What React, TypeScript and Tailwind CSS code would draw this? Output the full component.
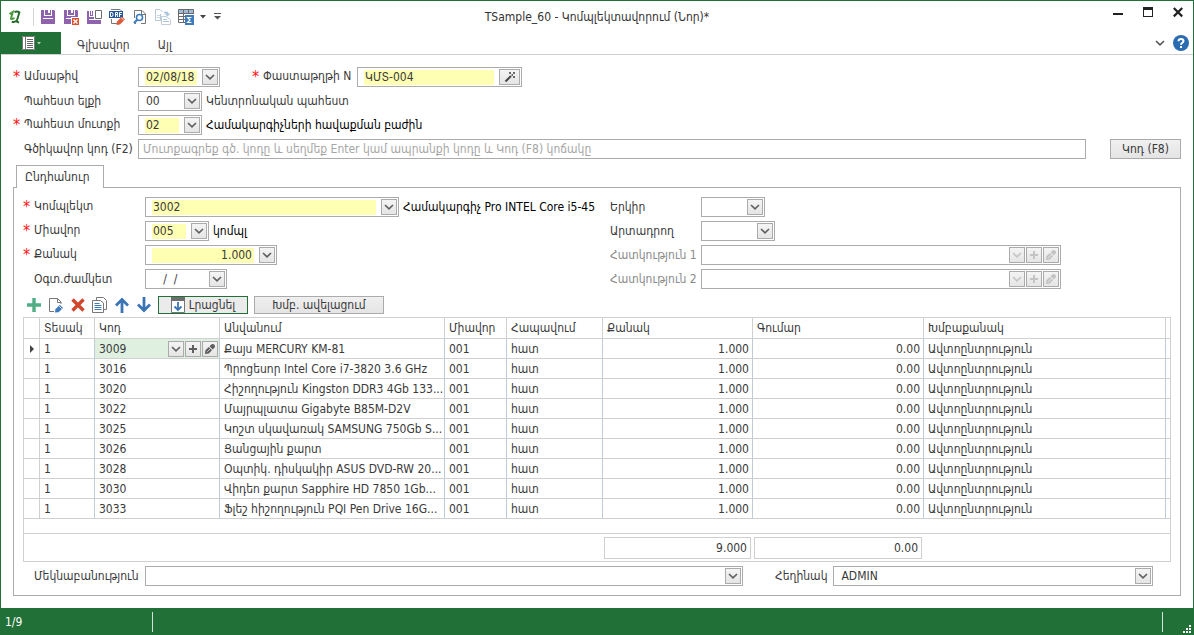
import { useState } from "react";
import type { ReactNode } from "react";
import clsx from "clsx";

const ROWS = [
  { code: "3009", name: "Քայս MERCURY KM-81" },
  { code: "3016", name: "Պրոցեսոր Intel Core i7-3820 3.6 GHz" },
  { code: "3020", name: "Հիշողություն Kingston DDR3 4Gb 133..." },
  { code: "3022", name: "Մայրպլատա Gigabyte B85M-D2V" },
  { code: "3025", name: "Կոշտ սկավառակ SAMSUNG 750Gb S..." },
  { code: "3026", name: "Ցանցային քարտ" },
  { code: "3028", name: "Օպտիկ. դիսկակիր ASUS DVD-RW 20..." },
  { code: "3030", name: "Վիդեո քարտ Sapphire HD 7850 1Gb..." },
  { code: "3033", name: "Ֆլեշ հիշողություն PQI Pen Drive 16G..." },
];

/* ── Icons ── */

function Svg({ children, size = 16 }: { children: ReactNode; size?: number }) {
  return (
    <svg width={size} height={size} viewBox="0 0 16 16" fill="none" aria-hidden="true" className="shrink-0">
      {children}
    </svg>
  );
}

const Logo = () => (
  <Svg>
    <path d="M2.5 5.2 5.8 3 4 9.6Q4.2 10.6 7.6 9.2" stroke="#4b9a3c" strokeWidth="2" />
    <path d="M7.5 3.2Q10 1.8 12.4 3.4L9.6 12.4 12 13.6M4.8 12.6Q7 13.8 9.6 11.8" stroke="#256b2c" strokeWidth="1.9" />
  </Svg>
);

const Floppy = () => (
  <>
    <path d="M1 1H14L15 2V15H1Z" fill="#8e62ac" />
    <path d="M4 1H5V6H11V1H12V7H4Z" fill="#fff" />
    <path d="M8 1H10V4H8Z" fill="#fff" />
    <path d="M3 9H13V10H3Z" fill="#fff" />
  </>
);

const IconSave = () => (
  <Svg>
    <Floppy />
  </Svg>
);

const IconSaveClose = () => (
  <Svg>
    <Floppy />
    <path d="M8 8H16V16H8Z" fill="#fff" />
    <path d="M9 9H16V16H9Z" fill="#d9532f" />
    <path d="M10.5 10.5 14.5 14.5M14.5 10.5 10.5 14.5" stroke="#fff" strokeWidth="1.3" />
  </Svg>
);

const IconSaveNew = () => (
  <Svg>
    <path d="M1 2H3V8H8V11H15V15H1Z" fill="#8e62ac" />
    <path d="M4 2H7V7H4Z" fill="#8e62ac" />
    <path d="M5 2H6V6H5Z" fill="#fff" />
    <path d="M3 10H13V11H3Z" fill="#fff" />
    <path d="M9.5 1.5H15.5V9.5H9.5Z" fill="#fff" stroke="#6d6d6d" />
  </Svg>
);

const IconDrf = () => (
  <Svg>
    <path d="M2 0.5H11L13 2.5" stroke="#777" />
    <path d="M2.5 10V14.5H8" stroke="#777" />
    <path d="M0 2H14V9H0Z" fill="#24569c" />
    <path d="M1.5 3.5V7.5H3Q4 7.5 4 5.5T3 3.5ZM6.5 8V3.5H8.5V5.5H6.5M8 5.5 8.8 8M10.5 8V3.5H13M10.5 5.5H12.5" stroke="#fff" />
    <path d="M8 12.5 13 7.5 16 10.5 11 15.5 7.5 16Z" fill="#dc5b39" />
    <path d="M12 8.5 15 11.5" stroke="#fff" strokeWidth=".8" />
  </Svg>
);

const IconPreview = () => (
  <Svg>
    <path d="M2.5 9V1.5H10L13.5 5V14.5H9M2.5 14V14.5H4" stroke="#777" />
    <path d="M9.5 1.5V5.5H13.5" stroke="#777" />
    <circle cx="7.5" cy="8.5" r="3" fill="#fff" stroke="#3b7cc0" strokeWidth="1.6" />
    <path d="M5.2 10.8 2 14" stroke="#3b7cc0" strokeWidth="2.2" />
  </Svg>
);

const IconCopyTo = () => (
  <Svg>
    <path d="M.5 11.5V.5H5L7.5 3M.5 11.5H5.5V5" stroke="#b7c9da" />
    <path d="M9 3.5H12.5V6M10.5 4.5 12.5 6.5 14.5 4.5" stroke="#a8c4dd" strokeWidth="1.3" />
    <path d="M6.5 7.5H11L15.5 10.5V15.5H6.5Z" fill="#fff" stroke="#c3cdd6" />
    <path d="M8 10.5H12M8 12.5H14" stroke="#a8c4dd" />
    <path d="M2 6.5H5M2 8.5H5" stroke="#c9d6e2" />
  </Svg>
);

const IconTotals = () => (
  <Svg>
    <path d="M0 1H16V5H0Z" fill="#9fbad6" />
    <path d="M.5.5H15.5V5M.5.5V13.5H7M0 4.5H16M0 7.5H7M0 10.5H7M5.5.5V13.5M10.5.5V5" stroke="#6a6a6a" />
    <path d="M7 6H16V16H7Z" fill="#3f7bbb" />
    <path d="M13.5 8.5H9.7L12 11 9.7 13.5H13.5" stroke="#fff" strokeWidth="1.2" />
  </Svg>
);

const IconWand = () => (
  <svg width="12" height="12" viewBox="0 0 12 12" fill="none" aria-hidden="true">
    <path d="M1.5 10.5 7 5" stroke="#4a4a4a" strokeWidth="2" />
    <path d="M5 1H7V3H5ZM9 1H11V3H9ZM9 5H11V7H9ZM7.5 3H9V5H7.5Z" fill="#6a6a6a" />
  </svg>
);

const IconChevron = () => (
  <svg width="10" height="8" viewBox="0 0 10 8" fill="none" aria-hidden="true">
    <path d="M1 2 5 5.8 9 2" stroke="currentColor" strokeWidth="1.6" />
  </svg>
);

const IconPlus = () => (
  <svg width="10" height="10" viewBox="0 0 10 10" fill="none" aria-hidden="true">
    <path d="M5 1V9M1 5H9" stroke="currentColor" strokeWidth="2" />
  </svg>
);

const IconPencil = () => (
  <svg width="12" height="12" viewBox="0 0 12 12" fill="currentColor" aria-hidden="true">
    <path d="M1 11 1.4 7.2 4.8 4 8 7.2 4.8 10.6ZM5.5 3.3 7.6 1.3Q9 .4 10.2 1.6 11.6 3 10.7 4.4L8.7 6.5Z" />
    <path d="M3.2 8.8 6 6" stroke="#f0f0f0" strokeWidth=".7" />
  </svg>
);

const IconNewDoc = () => (
  <Svg>
    <path d="M6 14.5H1.5V1.5H9.5L13 5V7M9.5 1.5V5.5H13" stroke="#777" />
    <path d="M7 15.5 7.4 12.2 11.8 7.8 15 11 10.6 15.2Z" fill="#3f7bbb" />
    <path d="M11 9 13.8 11.8" stroke="#fff" strokeWidth=".8" />
  </Svg>
);

const IconCopy = () => (
  <Svg>
    <path d="M4.5 3V.5H11.5L14.5 3.5V12.5H11.5" stroke="#777" />
    <path d="M.5 3.5H8.5L11.5 6V15.5H.5Z" fill="#fff" stroke="#777" />
    <path d="M2.5 6.5H7.5M2.5 8.5H9.5M2.5 10.5H9.5M2.5 12.5H9.5" stroke="#3f7bbb" />
  </Svg>
);

/* ── Controls ── */

function MiniButton({
  children,
  label,
  wide,
  disabled,
}: {
  children: ReactNode;
  label: string;
  wide?: boolean;
  disabled?: boolean;
}) {
  return (
    <button
      type="button"
      aria-label={label}
      disabled={disabled}
      className={clsx(
        "flex h-4 shrink-0 items-center justify-center border border-[#ababab] bg-linear-to-b from-[#f4f4f4] to-[#e5e5e5]",
        wide ? "w-[21px]" : "w-4",
        disabled ? "text-[#c4c4c4]" : "text-[#5f5f5f]"
      )}
    >
      {children}
    </button>
  );
}

function Box({ children, className }: { children: ReactNode; className: string }) {
  return (
    <div className={clsx("flex h-5 shrink-0 items-center gap-px border border-[#ababab] bg-white pr-px", className)}>
      {children}
    </div>
  );
}

const fieldClass = "mr-1 ml-1.5 h-[15px] min-w-0 flex-1 pl-px leading-[15px] outline-none";

function TextBox(props: {
  id: string;
  value?: string;
  className: string;
  required?: boolean;
  right?: boolean;
  disabled?: boolean;
  children?: ReactNode;
}) {
  return (
    <Box className={props.className}>
      <input
        id={props.id}
        defaultValue={props.value}
        disabled={props.disabled}
        className={clsx(fieldClass, props.required && "bg-[#ffffb4]", props.right && "pr-0.5 text-right")}
      />
      {props.children}
    </Box>
  );
}

function Combo(props: { id: string; value?: string; className: string; required?: boolean }) {
  return (
    <Box className={props.className}>
      <select
        id={props.id}
        defaultValue={props.value}
        className={clsx(fieldClass, "appearance-none", props.required && "bg-[#ffffb4]")}
      >
        <option>{props.value}</option>
      </select>
      <span className="pointer-events-none flex size-4 shrink-0 items-center justify-center border border-[#ababab] bg-linear-to-b from-[#f4f4f4] to-[#e5e5e5] text-[#5f5f5f]">
        <IconChevron />
      </span>
    </Box>
  );
}

function Label({
  children,
  htmlFor,
  required,
  className,
}: {
  children: ReactNode;
  htmlFor: string;
  required?: boolean;
  className?: string;
}) {
  return (
    <label htmlFor={htmlFor} className={clsx("flex shrink-0 whitespace-nowrap", className)}>
      <span className="w-[11px] text-base leading-[18px] text-[#ff1010]">{required && "*"}</span>
      {children}
    </label>
  );
}

function PropertyField({ id, label }: { id: string; label: string }) {
  return (
    <div className="flex items-center">
      <label htmlFor={id} className="w-[91px] shrink-0 whitespace-nowrap text-[#8a8a8a]">
        {label}
      </label>
      <TextBox id={id} disabled className="w-[360px]">
        <MiniButton label="Ընտրել" disabled>
          <IconChevron />
        </MiniButton>
        <MiniButton label="Ավելացնել" disabled>
          <IconPlus />
        </MiniButton>
        <MiniButton label="Խմբագրել" disabled>
          <IconPencil />
        </MiniButton>
      </TextBox>
    </div>
  );
}

/* ── Window parts ── */

function TitleBar() {
  const quick = [
    { label: "Գրանցել", icon: <IconSave /> },
    { label: "Գրանցել և փակել", icon: <IconSaveClose /> },
    { label: "Գրանցել և ստեղծել նորը", icon: <IconSaveNew /> },
    { label: "Սևագիր", icon: <IconDrf /> },
    { label: "Դիտել", icon: <IconPreview /> },
    { label: "Պատճենել", icon: <IconCopyTo /> },
    { label: "Հանրագումար", icon: <IconTotals /> },
  ];
  return (
    <header className="grid h-[31px] grid-cols-[1fr_auto_1fr] items-center">
      <div className="flex items-center pl-1.5">
        <Logo />
        <span className="mr-1.5 ml-2.5 h-[18px] w-px bg-[#d4d4d4]" />
        <div className="flex items-center gap-[7px]">
          {quick.map((q) => (
            <button key={q.label} type="button" aria-label={q.label}>
              {q.icon}
            </button>
          ))}
        </div>
        <button type="button" aria-label="Ավելին" className="ml-1.5">
          <svg width="6" height="4" viewBox="0 0 6 4" aria-hidden="true">
            <path d="M0 0H6L3 3.5Z" fill="#444" />
          </svg>
        </button>
        <button type="button" aria-label="Կարգավորել" className="ml-2">
          <svg width="7" height="7" viewBox="0 0 7 7" aria-hidden="true">
            <path d="M0 0H7V1H0ZM0 3H7L3.5 6.5Z" fill="#555" />
          </svg>
        </button>
      </div>
      <h1 className="text-[#333]">TSample_60 - Կոմպլեկտավորում (Նոր)*</h1>
      <div className="flex items-center justify-end gap-5 self-start pt-1.5 pr-2.5">
        <button type="button" aria-label="Ծալել">
          <svg width="10" height="12" viewBox="0 0 10 12" aria-hidden="true">
            <path d="M0 6H10V8H0Z" fill="#222" />
          </svg>
        </button>
        <button type="button" aria-label="Մեծացնել">
          <svg width="10" height="12" viewBox="0 0 10 12" aria-hidden="true">
            <path d="M0 0H10V10H0ZM1 3V9H9V3Z" fill="#222" fillRule="evenodd" />
          </svg>
        </button>
        <button type="button" aria-label="Փակել">
          <svg width="10" height="12" viewBox="0 0 10 12" fill="none" aria-hidden="true">
            <path d="M.8 1 9.2 9.4M9.2 1 .8 9.4" stroke="#222" strokeWidth="2.2" />
          </svg>
        </button>
      </div>
    </header>
  );
}

function RibbonTabs() {
  return (
    <nav className="flex h-[23px] items-center border-b border-[#d0d0d0] pr-1">
      <button
        type="button"
        aria-label="Մենյու"
        className="flex h-full w-[60px] items-center justify-center gap-0.5 bg-[#217037]"
      >
        <svg width="13" height="14" viewBox="0 0 13 14" fill="none" aria-hidden="true">
          <path d="M0 0H13V14H0Z" fill="#fff" />
          <path d="M.5.5H12.5V13.5H.5ZM3.5.5V13.5" stroke="#777" />
          <path d="M5 3.5H11M5 5.5H11M5 7.5H11M5 9.5H11M5 11.5H11" stroke="#666" />
        </svg>
        <svg width="4" height="3" viewBox="0 0 4 3" aria-hidden="true">
          <path d="M0 0H4L2 2.5Z" fill="#b5cfbb" />
        </svg>
      </button>
      <button type="button" className="ml-4 pt-1 text-[#444]">
        Գլխավոր
      </button>
      <button type="button" className="ml-7 pt-1 text-[#444]">
        Այլ
      </button>
      <button type="button" aria-label="Ծալել ժապավենը" className="ml-auto text-[#555]">
        <IconChevron />
      </button>
      <button type="button" aria-label="Օգնություն" className="ml-2">
        <Svg>
          <circle cx="8" cy="8" r="8" fill="#2b6cb0" />
          <path d="M5.5 6.2Q5.6 4 8 4T10.5 6.1Q10.5 7.2 9.2 7.8 8 8.4 8 9.8" stroke="#fff" strokeWidth="2" />
          <path d="M7 11H9V13H7Z" fill="#fff" />
        </Svg>
      </button>
    </nav>
  );
}

function Toolbar() {
  return (
    <div className="flex h-5 items-center gap-1.5 pl-[3px]">
      <button type="button" aria-label="Ավելացնել տող">
        <Svg>
          <path d="M8 1V15M1 8H15" stroke="#4fae84" strokeWidth="3.4" />
        </Svg>
      </button>
      <button type="button" aria-label="Խմբագրել տողը">
        <IconNewDoc />
      </button>
      <button type="button" aria-label="Հեռացնել տողը">
        <Svg>
          <path d="M2.5 2.5 13.5 13.5M13.5 2.5 2.5 13.5" stroke="#d0452b" strokeWidth="3.4" />
        </Svg>
      </button>
      <button type="button" aria-label="Պատճենել տողը">
        <IconCopy />
      </button>
      <button type="button" aria-label="Վերև">
        <Svg>
          <path d="M8 16V2.5M2 8.5 8 2.5 14 8.5" stroke="#3a74b5" strokeWidth="2.8" />
        </Svg>
      </button>
      <button type="button" aria-label="Ներքև">
        <Svg>
          <path d="M8 0V13.5M2 7.5 8 13.5 14 7.5" stroke="#3a74b5" strokeWidth="2.8" />
        </Svg>
      </button>
      <button
        type="button"
        className="flex h-[18px] w-[90px] items-center justify-center gap-1 border border-[#217037] bg-[#ebebeb]"
      >
        <svg width="14" height="16" viewBox="0 0 14 16" fill="none" aria-hidden="true">
          <path d="M.5 1.5H13.5V15.5H.5Z" fill="#fff" stroke="#777" />
          <path d="M0 0H14V4H0Z" fill="#6e6e6e" />
          <path d="M7 5V13M3.5 9.5 7 13 10.5 9.5" stroke="#3a74b5" strokeWidth="1.8" />
        </svg>
        Լրացնել
      </button>
      <button
        type="button"
        className="h-[18px] w-[130px] border border-[#ababab] bg-linear-to-b from-[#f0f0f0] to-[#e4e4e4] leading-4"
      >
        Խմբ. ավելացում
      </button>
    </div>
  );
}

const th = "border-r border-b border-[#d0d0d0] px-1 text-left font-normal";
const td = "overflow-hidden border-r border-b border-r-[#bfcbd9] border-b-[#d0d0d0] pl-1 whitespace-nowrap";
const num = "pr-[3px] text-right";

function ItemsGrid() {
  const [active, setActive] = useState(0);

  return (
    <div className="border border-[#d0d0d0]">
      <table className="w-full table-fixed border-separate border-spacing-0">
        <colgroup>
          <col className="w-4" />
          <col className="w-[55px]" />
          <col className="w-[125px]" />
          <col className="w-[225px]" />
          <col className="w-[62px]" />
          <col className="w-24" />
          <col className="w-[150px]" />
          <col className="w-[171px]" />
          <col />
          <col className="w-1" />
        </colgroup>
        <thead>
          <tr className="h-[21px]">
            <th className={th} />
            <th className={th}>Տեսակ</th>
            <th className={th}>Կոդ</th>
            <th className={th}>Անվանում</th>
            <th className={th}>Միավոր</th>
            <th className={th}>Հապավում</th>
            <th className={th}>Քանակ</th>
            <th className={th}>Գումար</th>
            <th className={th}>Խմբաքանակ</th>
            <th className="border-b border-[#d0d0d0]" />
          </tr>
        </thead>
        <tbody>
          {ROWS.map((row, i) => (
            <tr key={row.code} className="h-5" onClick={() => setActive(i)}>
              <td className="border-r border-b border-[#d0d0d0] pl-1.5">
                {active === i && (
                  <svg width="4" height="8" viewBox="0 0 4 8" aria-hidden="true">
                    <path d="M0 0 4 4 0 8Z" fill="#444" />
                  </svg>
                )}
              </td>
              <td className={td}>1</td>
              <td className={clsx(td, active === i && "bg-[#dff0e1]")}>
                {active === i ? (
                  <div className="flex items-center gap-px pr-px">
                    <span className="flex-1">{row.code}</span>
                    <MiniButton label="Ընտրել">
                      <IconChevron />
                    </MiniButton>
                    <MiniButton label="Ավելացնել">
                      <IconPlus />
                    </MiniButton>
                    <MiniButton label="Խմբագրել">
                      <IconPencil />
                    </MiniButton>
                  </div>
                ) : (
                  row.code
                )}
              </td>
              <td className={td}>{row.name}</td>
              <td className={td}>001</td>
              <td className={td}>հատ</td>
              <td className={clsx(td, num)}>1.000</td>
              <td className={clsx(td, num)}>0.00</td>
              <td className={td}>Ավտոընտրություն</td>
              <td className="border-b border-[#d0d0d0]" />
            </tr>
          ))}
        </tbody>
        <tfoot>
          <tr className="h-[15px]">
            <td colSpan={10} className="border-b border-[#d0d0d0]" />
          </tr>
          <tr className="h-[27px]">
            <td colSpan={6} />
            <td className="pr-0.5 pl-px">
              <div className={clsx(num, "border border-[#d0d0d0] leading-5")}>9.000</div>
            </td>
            <td className="pr-0.5 pl-px">
              <div className={clsx(num, "border border-[#d0d0d0] leading-5")}>0.00</div>
            </td>
            <td colSpan={2} />
          </tr>
        </tfoot>
      </table>
    </div>
  );
}

export default function App() {
  return (
    <div className="flex min-h-screen flex-col border border-b-0 border-[#217037] bg-white font-['DejaVu_Sans_Condensed','DejaVu_Sans',sans-serif] text-xs leading-4 text-[#3a3a3a]">
      <TitleBar />
      <RibbonTabs />

      <main className="flex-1 px-3 pt-3 pb-3">
        <section className="flex flex-col gap-1">
          <div className="flex items-center">
            <Label htmlFor="date" required className="w-[125px]">
              Ամսաթիվ
            </Label>
            <TextBox id="date" value="02/08/18" required className="w-[82px]">
              <MiniButton label="Օրացույց">
                <IconChevron />
              </MiniButton>
            </TextBox>
            <Label htmlFor="doc" required className="ml-8 w-[105px]">
              Փաստաթղթի N
            </Label>
            <TextBox id="doc" value="ԿՄՏ-004" required className="w-[165px]">
              <MiniButton label="Համարակալել" wide>
                <IconWand />
              </MiniButton>
            </TextBox>
          </div>
          <div className="flex items-center">
            <Label htmlFor="from" className="w-[125px]">
              Պահեստ ելքի
            </Label>
            <Combo id="from" value="00" className="w-16" />
            <span className="ml-1">Կենտրոնական պահեստ</span>
          </div>
          <div className="flex items-center">
            <Label htmlFor="to" required className="w-[125px]">
              Պահեստ մուտքի
            </Label>
            <Combo id="to" value="02" required className="w-16" />
            <span className="ml-1 text-black">Համակարգիչների հավաքման բաժին</span>
          </div>
          <div className="flex items-center">
            <Label htmlFor="barcode" className="w-[125px]">
              Գծիկավոր կոդ (F2)
            </Label>
            <input
              id="barcode"
              placeholder="Մուտքագրեք գծ. կոդը և սեղմեք Enter կամ ապրանքի կոդը և Կոդ (F8) կոճակը"
              className="h-5 min-w-0 flex-1 border border-[#ababab] px-1 outline-none placeholder:text-[#a6a6a6]"
            />
            <button
              type="button"
              className="ml-6 h-5 w-[71px] border border-[#ababab] bg-linear-to-b from-[#f0f0f0] to-[#e4e4e4] leading-4"
            >
              Կոդ (F8)
            </button>
          </div>
        </section>

        <div role="tablist" className="relative -mb-px mt-1.5 flex pl-[3px]">
          <button
            type="button"
            role="tab"
            aria-selected="true"
            className="h-[23px] w-[88px] border border-b-0 border-[#ababab] bg-white pl-2 text-left"
          >
            Ընդհանուր
          </button>
        </div>

        <section className="border border-[#ababab] px-[9px] py-[9px]">
          <div className="flex">
            <div className="flex w-[587px] shrink-0 flex-col gap-1">
              <div className="flex items-center">
                <Label htmlFor="kit" required className="w-[122px]">
                  Կոմպլեկտ
                </Label>
                <Combo id="kit" value="3002" required className="w-[254px]" />
                <span className="ml-1 whitespace-nowrap text-black">Համակարգիչ Pro INTEL Core i5-45</span>
              </div>
              <div className="flex items-center">
                <Label htmlFor="unit" required className="w-[122px]">
                  Միավոր
                </Label>
                <Combo id="unit" value="005" required className="w-16" />
                <span className="ml-1 text-black">կոմպլ</span>
              </div>
              <div className="flex items-center">
                <Label htmlFor="qty" required className="w-[122px]">
                  Քանակ
                </Label>
                <TextBox id="qty" value="1.000" required right className="w-[132px]">
                  <MiniButton label="Հաշվիչ">
                    <IconChevron />
                  </MiniButton>
                </TextBox>
              </div>
              <div className="flex items-center">
                <Label htmlFor="expiry" className="w-[122px]">
                  Օգտ.ժամկետ
                </Label>
                <TextBox id="expiry" value="   /  /" className="w-[82px]">
                  <MiniButton label="Օրացույց">
                    <IconChevron />
                  </MiniButton>
                </TextBox>
              </div>
            </div>

            <div className="flex flex-1 flex-col gap-1">
              <div className="flex items-center">
                <label htmlFor="country" className="w-[91px]">
                  Երկիր
                </label>
                <Combo id="country" className="w-16" />
              </div>
              <div className="flex items-center">
                <label htmlFor="maker" className="w-[91px]">
                  Արտադրող
                </label>
                <Combo id="maker" className="w-[74px]" />
              </div>
              <PropertyField id="prop1" label="Հատկություն 1" />
              <PropertyField id="prop2" label="Հատկություն 2" />
            </div>
          </div>

          <div className="mt-1.5 mb-0.5">
            <Toolbar />
          </div>

          <ItemsGrid />

          <div className="mt-1 flex items-center">
            <label htmlFor="comment" className="w-[122px] shrink-0 pl-[11px]">
              Մեկնաբանություն
            </label>
            <Combo id="comment" className="w-[598px]" />
            <label htmlFor="author" className="mr-1.5 ml-8">
              Հեղինակ
            </label>
            <Combo id="author" value="ADMIN" className="w-[320px]" />
          </div>
        </section>
      </main>

      <footer className="flex h-[27px] items-center bg-[#217037] text-white">
        <span className="w-[151px] pl-1">1/9</span>
        <span className="h-5 w-px bg-[#d3e3d7]" />
        <span className="ml-auto h-5 w-px bg-[#d3e3d7]" />
        <svg width="30" height="27" viewBox="0 0 30 27" aria-hidden="true">
          <path d="M26 17H28V19H26ZM23 20H25V22H23ZM26 20H28V22H26ZM20 23H22V25H20ZM23 23H25V25H23ZM26 23H28V25H26Z" fill="#fff" />
        </svg>
      </footer>
    </div>
  );
}
